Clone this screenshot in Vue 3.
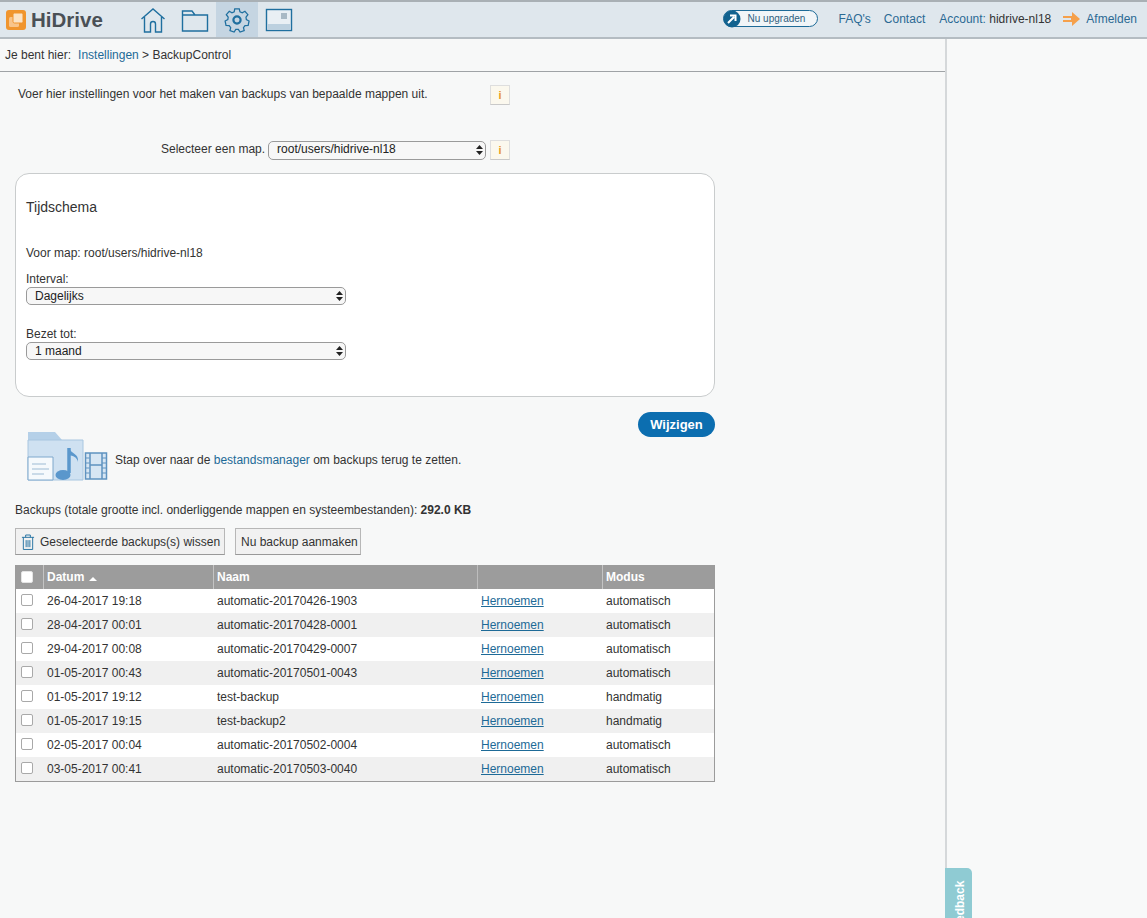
<script setup>
// Backup instellingen pagina
const navIcons = ['home', 'folder', 'settings', 'screen']

const backups = [
  { date: '26-04-2017 19:18', name: 'automatic-20170426-1903', mode: 'automatisch' },
  { date: '28-04-2017 00:01', name: 'automatic-20170428-0001', mode: 'automatisch' },
  { date: '29-04-2017 00:08', name: 'automatic-20170429-0007', mode: 'automatisch' },
  { date: '01-05-2017 00:43', name: 'automatic-20170501-0043', mode: 'automatisch' },
  { date: '01-05-2017 19:12', name: 'test-backup', mode: 'handmatig' },
  { date: '01-05-2017 19:15', name: 'test-backup2', mode: 'handmatig' },
  { date: '02-05-2017 00:04', name: 'automatic-20170502-0004', mode: 'automatisch' },
  { date: '03-05-2017 00:41', name: 'automatic-20170503-0040', mode: 'automatisch' }
]
</script>

<template>
  <div class="page">
    <!-- Bovenbalk -->
    <header class="topbar">
      <div class="logo">
        <svg class="logo-mark" width="20" height="20" viewBox="0 0 20 20">
          <rect width="20" height="20" rx="3" fill="#f0952e" />
          <rect x="3" y="7" width="10" height="10" rx="1.5" fill="#f8c48a" />
          <rect x="7" y="3" width="10" height="10" rx="1.5" fill="#fbe3c6" stroke="#f0952e" />
        </svg>
        <span class="logo-text">HiDrive</span>
      </div>
      <nav class="nav">
        <a v-for="icon in navIcons" :key="icon" class="nav-item" :class="{ active: icon === 'settings' }">
          <svg v-if="icon === 'home'" width="28" height="28" viewBox="0 0 28 28" fill="none" stroke="#1f6f9f" stroke-width="1.4">
            <path d="M2.5 13 14 3l11.500 10M5.500 11v15h6v-8a2.500 2.500 0 0 1 5 0v8h6V11" />
          </svg>
          <svg v-else-if="icon === 'folder'" width="28" height="28" viewBox="0 0 28 28" fill="none" stroke="#1f6f9f" stroke-width="1.4">
            <path d="M1.500 25V5h9.500l3 4h12.500v16zM1.500 9H14" />
          </svg>
          <svg v-else-if="icon === 'settings'" width="28" height="28" viewBox="0 0 28 28" fill="none" stroke="#1f6f9f" stroke-width="1.4">
            <path d="M11.500 2.500h5l.8 3.400 2.500 1.100 3-1.800 3.300 3.800-2.100 2.800.4 2.700 3 1.500-1 4.900-3.500.2-1.700 2.200.8 3.400-4.600 1.600-1.900-2.900h-2.800l-1.900 2.900-4.600-1.600.8-3.400-1.700-2.200-3.500-.2-1-4.900 3-1.500.4-2.700-2.100-2.800 3.300-3.800 3 1.800 2.500-1.100z" transform="translate(1.400 .6) scale(.9)" />
            <circle cx="14" cy="14" r="3.600" stroke-width="2.200" />
          </svg>
          <svg v-else width="28" height="28" viewBox="0 0 28 28" fill="none">
            <rect x="1.500" y="3.500" width="25" height="21" fill="#e9eff4" stroke="#1f6f9f" stroke-width="1.400" />
            <rect x="2.500" y="18" width="23" height="6" fill="#bcd0df" />
            <rect x="16" y="7" width="6" height="6" fill="#a9b9c5" />
          </svg>
        </a>
      </nav>
      <div class="top-right">
        <a class="upgrade">
          <span class="upgrade-icon">
            <svg width="18" height="18" viewBox="0 0 18 18">
              <circle cx="9" cy="9" r="8.500" fill="#12628f" />
              <path d="M5 13 11 7M7 5.500h5.500V11" fill="none" stroke="#fff" stroke-width="2" />
            </svg>
          </span>
          <span class="upgrade-label">Nu upgraden</span>
        </a>
        <a class="top-link faq">FAQ's</a>
        <a class="top-link contact">Contact</a>
        <span class="account"><span class="top-link">Account:</span> hidrive-nl18</span>
        <svg class="logout-arrow" width="18" height="14" viewBox="0 0 18 14">
          <path d="M0 4h9V0l8 7-8 7v-4H0V8h8V6H0z" fill="#f5a04b" />
        </svg>
        <a class="top-link">Afmelden</a>
      </div>
    </header>

    <div class="content">
      <main class="main">
        <div class="breadcrumb">
          <span class="crumb-label">Je bent hier:</span>
          <a class="link">Instellingen</a>
          <span>&nbsp;&gt; BackupControl</span>
        </div>

        <div class="body">
          <div class="intro">
            <p class="intro-text">Voer hier instellingen voor het maken van backups van bepaalde mappen uit.</p>
            <button class="info-btn">i</button>
          </div>

          <div class="map-row">
            <span class="map-label">Selecteer een map.</span>
            <div class="select-wrap map-select">
              <select class="select">
                <option>root/users/hidrive-nl18</option>
              </select>
              <svg class="select-arrows" width="7" height="10" viewBox="0 0 7 10"><path d="M3.500 0 7 4H0zM3.500 10 0 6h7z" /></svg>
            </div>
            <button class="info-btn small">i</button>
          </div>

          <!-- Tijdschema -->
          <section class="panel">
            <h3 class="panel-title">Tijdschema</h3>
            <p class="panel-map">Voor map: root/users/hidrive-nl18</p>
            <label class="field-label">Interval:</label>
            <div class="select-wrap field-select">
              <select class="select"><option>Dagelijks</option></select>
              <svg class="select-arrows" width="7" height="10" viewBox="0 0 7 10"><path d="M3.500 0 7 4H0zM3.500 10 0 6h7z" /></svg>
            </div>
            <label class="field-label second">Bezet tot:</label>
            <div class="select-wrap field-select">
              <select class="select"><option>1 maand</option></select>
              <svg class="select-arrows" width="7" height="10" viewBox="0 0 7 10"><path d="M3.500 0 7 4H0zM3.500 10 0 6h7z" /></svg>
            </div>
          </section>

          <div class="save-row">
            <button class="save-btn">Wijzigen</button>
          </div>

          <div class="restore-row">
            <svg class="restore-icon" width="81" height="58" viewBox="0 0 81 58">
              <path d="M1 1h27l7 8h21v40H1z" fill="#b5d0e8" />
              <path d="M1 9h55v40H1z" fill="#cfe1f1" stroke="#a8c6e0" />
              <path d="M1 26h25v23H1z" fill="#f5f9fc" stroke="#7fa8cc" />
              <path d="M5 33h14M5 38h17M5 43h12" stroke="#9dbbd4" />
              <path d="M42 17v25" stroke="#5a97cc" stroke-width="3.500" />
              <path d="M42 17c2 6 10 5 9 14-1-5-5-6-9-7z" fill="#5a97cc" />
              <ellipse cx="36" cy="44" rx="7.500" ry="5" fill="#5a97cc" />
              <rect x="58.500" y="22" width="21" height="26" fill="#d7e6f3" stroke="#5f93c0" stroke-width="1.500" />
              <path d="M63 22v26M75 22v26M63 34h12" stroke="#5f93c0" stroke-width="1.500" />
              <path d="M58.500 27h4M58.500 32h4M58.500 37h4M58.500 42h4M75 27h4M75 32h4M75 37h4M75 42h4" stroke="#5f93c0" />
            </svg>
            <span class="restore-text">Stap over naar de <a class="link">bestandsmanager</a> om backups terug te zetten.</span>
          </div>

          <p class="size-line">Backups (totale grootte incl. onderliggende mappen en systeembestanden): <strong>292.0 KB</strong></p>

          <div class="actions">
            <button class="action-btn delete">
              <svg width="14" height="18" viewBox="0 0 15 18" fill="none" stroke="#1f6f9f" stroke-width="1">
                <path d="M1 4h13M5 4V1.500h5V4M2.500 4v13h10V4M5.500 7v7.500M7.500 7v7.500M9.500 7v7.500" />
              </svg>
              Geselecteerde backups(s) wissen
            </button>
            <button class="action-btn">Nu backup aanmaken</button>
          </div>

          <!-- Backup tabel -->
          <div class="table">
            <div class="row head">
              <div class="cell check"><span class="box head-box"></span></div>
              <div class="cell date">Datum <i class="sort"></i></div>
              <div class="cell name">Naam</div>
              <div class="cell rename"></div>
              <div class="cell mode">Modus</div>
            </div>
            <div v-for="(item, i) in backups" :key="item.date" class="row" :class="{ alt: i % 2 === 1 }">
              <div class="cell check"><span class="box"></span></div>
              <div class="cell date">{{ item.date }}</div>
              <div class="cell name">{{ item.name }}</div>
              <div class="cell rename"><a class="rename-link">Hernoemen</a></div>
              <div class="cell mode">{{ item.mode }}</div>
            </div>
          </div>
        </div>
      </main>
      <aside class="side"></aside>
    </div>

    <a class="feedback"><span class="feedback-text">Feedback</span></a>
  </div>
</template>

<style>
html,
body {
  margin: 0;
  background: #f8f9f9;
}
</style>

<style scoped>
.page {
  position: relative;
  width: 1147px;
  height: 918px;
  overflow: hidden;
  font-family: "Liberation Sans", Arial, sans-serif;
  font-size: 12px;
  color: #333;
  background: #f8f9f9;
}

.topbar {
  display: flex;
  align-items: center;
  height: 35px;
  background: #dfe7ed;
  border-top: 2px solid #a9b0b5;
  border-bottom: 2px solid #b4bcc2;
}

.logo {
  display: flex;
  align-items: center;
  width: 216px;
  padding-left: 6px;
  box-sizing: border-box;
}

.logo-mark {
  margin-right: 5px;
}

.logo-text {
  font-size: 20.5px;
  font-weight: 700;
  color: #4a5056;
}

.nav {
  display: flex;
  height: 100%;
  margin-left: -84px;
}

.nav-item {
  display: flex;
  align-items: center;
  justify-content: center;
  width: 42px;
  height: 100%;
}

.nav-item.active {
  background: #c5d5e2;
}

.top-right {
  display: flex;
  align-items: center;
  margin-left: auto;
  padding: 0 10px 2px 0;
}

.upgrade {
  position: relative;
  display: flex;
  align-items: center;
  width: 95px;
  height: 17px;
  margin-right: 21px;
  box-sizing: border-box;
  border: 1px solid #1d6a97;
  border-radius: 9px;
  background: #f1f5f8;
}

.upgrade-icon {
  position: absolute;
  left: -1px;
  top: -1px;
  height: 18px;
}

.upgrade-label {
  margin-left: 24px;
  font-size: 10px;
  color: #2f5f80;
}

.top-link {
  color: #2b6a94;
}

.faq {
  margin-right: 13px;
}

.contact {
  margin-right: 14px;
}

.account {
  color: #333;
  margin-right: 12px;
}

.logout-arrow {
  margin-right: 5px;
}

.content {
  display: flex;
  height: 879px;
}

.main {
  width: 945px;
  flex-shrink: 0;
  box-sizing: border-box;
  background: #f7f8f8;
}

.side {
  flex: 1;
  border-left: 2px solid #d5d8da;
}

.breadcrumb {
  display: flex;
  align-items: center;
  height: 33px;
  padding-left: 5px;
  box-sizing: border-box;
  border-bottom: 1px solid #9fa3a6;
}

.crumb-label {
  margin-right: 7px;
}

.link {
  color: #1d6a97;
}

.body {
  width: 730px;
  box-sizing: border-box;
  padding: 0 15px;
}

.intro {
  display: flex;
  align-items: center;
  height: 20px;
  margin-top: 13px;
  padding-left: 3px;
}

.intro-text {
  width: 472px;
  margin: 0 0 2px;
}

.info-btn {
  width: 20px;
  height: 20px;
  padding: 0;
  border: 1px solid #dedede;
  border-bottom-color: #c9c9c9;
  background: #fbf8ee;
  color: #e89a24;
  font-family: inherit;
  font-size: 11px;
  font-weight: 700;
}

.map-row {
  display: flex;
  align-items: center;
  height: 20px;
  margin-top: 35px;
  padding-left: 146px;
}

.map-label {
  margin: 0 3px 2px 0;
}

.select-wrap {
  position: relative;
}

.select {
  display: block;
  width: 100%;
  height: 100%;
  padding: 0 0 0 8px;
  appearance: none;
  border: 1px solid #9a9a9a;
  border-radius: 5px;
  background: #f7f7f7;
  color: #222;
  font-family: inherit;
  font-size: 12px;
}

.select-arrows {
  position: absolute;
  right: 3px;
  top: 4px;
  fill: #222;
}

.map-select {
  width: 218px;
  height: 19px;
  margin-right: 4px;
}

.map-select .select {
  padding-bottom: 2px;
}

.panel {
  height: 224px;
  margin-top: 13px;
  padding: 0 10px;
  box-sizing: border-box;
  border: 1px solid #c9cccd;
  border-radius: 14px;
  background: #fff;
  overflow: hidden;
}

.panel-title {
  margin: 26px 0 0;
  font-size: 14px;
  font-weight: 400;
  line-height: 15px;
}

.panel-map {
  margin: 31px 0 0;
  line-height: 14px;
}

.field-label {
  display: block;
  margin-top: 12px;
  line-height: 14px;
}

.field-label.second {
  margin-top: 22px;
}

.field-select {
  width: 320px;
  height: 18px;
  margin-top: 1px;
}

.save-row {
  display: flex;
  justify-content: flex-end;
  margin-top: 15px;
}

.save-btn {
  width: 77px;
  height: 25px;
  padding: 0;
  border: 0;
  border-radius: 13px;
  background: #0c6eb0;
  color: #fff;
  font-family: inherit;
  font-size: 13px;
  font-weight: 700;
}

.restore-row {
  display: flex;
  align-items: center;
  height: 58px;
  margin-top: -6px;
  padding-left: 12px;
}

.restore-icon {
  margin-right: 7px;
}

.size-line {
  margin: 14px 0 0;
  line-height: 14px;
}

.actions {
  display: flex;
  gap: 10px;
  margin-top: 11px;
}

.action-btn {
  display: flex;
  align-items: center;
  gap: 5px;
  height: 27px;
  padding: 0 2px 0 5px;
  box-sizing: border-box;
  border: 1px solid #b7b7b7;
  border-bottom-color: #999;
  background: #f1f1f1;
  color: #333;
  font-family: inherit;
  font-size: 12px;
  white-space: nowrap;
}

.action-btn.delete {
  width: 210px;
}

.table {
  width: 700px;
  margin-top: 10px;
  border: 1px solid #9b9b9b;
  border-top: 0;
  box-sizing: border-box;
}

.row {
  display: grid;
  grid-template-columns: 27px 170px 264px 125px 1fr;
  height: 24px;
  background: #fff;
}

.row.alt {
  background: #f0f0f0;
}

.row.head {
  height: 24px;
  background: #9c9c9c;
  color: #fff;
  font-weight: 700;
}

.cell {
  display: flex;
  align-items: center;
  padding-left: 4px;
  min-width: 0;
}

.row.head .cell + .cell {
  border-left: 1px solid #c4c4c4;
  padding-left: 3px;
}

.row.head .cell.rename {
  border-left-color: #bdbdbd;
}

.check {
  padding-left: 5px;
}

.box {
  display: block;
  width: 10px;
  height: 10px;
  border: 1px solid #a9a9a9;
  border-radius: 2px;
  background: #fff;
  margin-top: -2px;
}

.head-box {
  border-color: #e4e4e4;
  margin-top: 0;
}

.sort {
  display: inline-block;
  margin: 3px 0 0 5px;
  border-left: 4px solid transparent;
  border-right: 4px solid transparent;
  border-bottom: 4px solid #fff;
}

.rename-link {
  color: #1d6a97;
  text-decoration: underline;
}

.feedback {
  position: absolute;
  left: 945px;
  top: 868px;
  width: 27px;
  height: 50px;
  overflow: hidden;
  background: #8fcbd3;
  border-radius: 0 5px 0 0;
}

.feedback-text {
  position: absolute;
  left: 1px;
  top: 12px;
  width: 27px;
  height: 56px;
  writing-mode: vertical-rl;
  transform: rotate(180deg);
  display: flex;
  align-items: center;
  justify-content: flex-start;
  color: #fff;
  font-weight: 700;
  font-size: 12px;
}
</style>
